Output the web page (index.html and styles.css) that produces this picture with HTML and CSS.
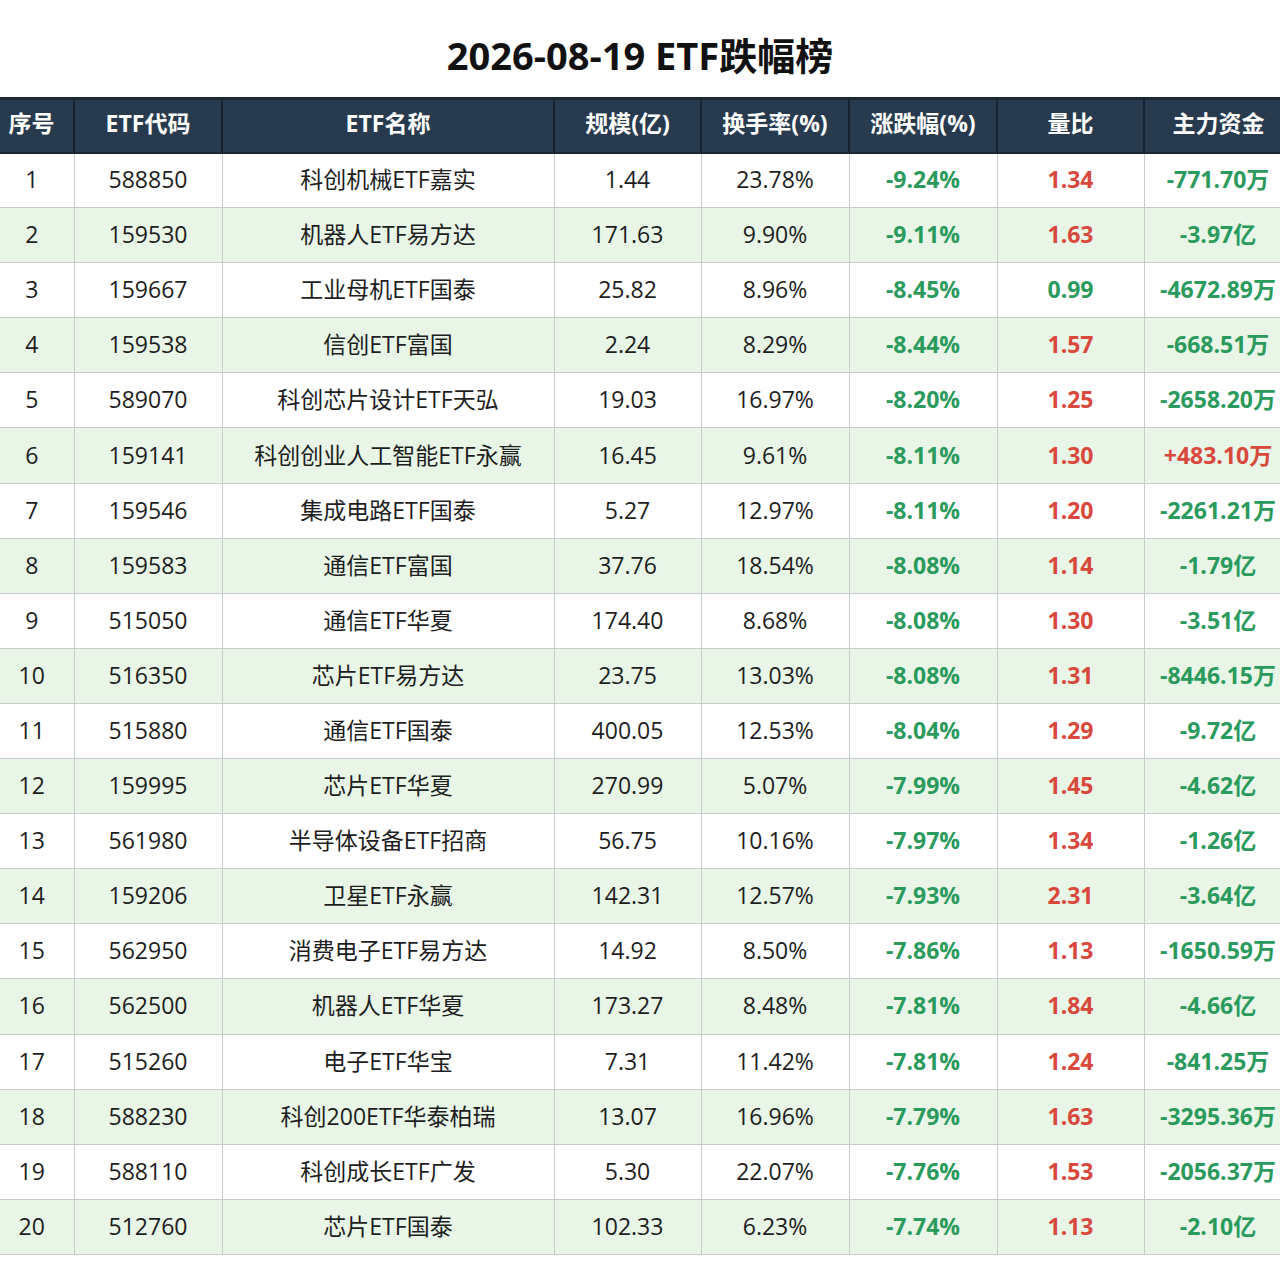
FILE: index.html
```html
<!DOCTYPE html>
<html lang="zh">
<head>
<meta charset="utf-8">
<title>2026-08-19 ETF跌幅榜</title>
<link rel="stylesheet" href="styles.css">
</head>
<body>
<div class="page">
  <h1 class="title">2026-08-19 ETF跌幅榜</h1>
  <table class="etf">
    <colgroup>
      <col class="c1"><col class="c2"><col class="c3"><col class="c4"><col class="c5"><col class="c6"><col class="c7"><col class="c8">
    </colgroup>
    <thead>
      <tr><th>序号</th><th>ETF代码</th><th>ETF名称</th><th>规模(亿)</th><th>换手率(%)</th><th>涨跌幅(%)</th><th>量比</th><th>主力资金</th></tr>
    </thead>
    <tbody>
      <tr><td>1</td><td>588850</td><td>科创机械ETF嘉实</td><td>1.44</td><td>23.78%</td><td class="g">-9.24%</td><td class="r">1.34</td><td class="g">-771.70万</td></tr>
      <tr><td>2</td><td>159530</td><td>机器人ETF易方达</td><td>171.63</td><td>9.90%</td><td class="g">-9.11%</td><td class="r">1.63</td><td class="g">-3.97亿</td></tr>
      <tr><td>3</td><td>159667</td><td>工业母机ETF国泰</td><td>25.82</td><td>8.96%</td><td class="g">-8.45%</td><td class="g">0.99</td><td class="g">-4672.89万</td></tr>
      <tr><td>4</td><td>159538</td><td>信创ETF富国</td><td>2.24</td><td>8.29%</td><td class="g">-8.44%</td><td class="r">1.57</td><td class="g">-668.51万</td></tr>
      <tr><td>5</td><td>589070</td><td>科创芯片设计ETF天弘</td><td>19.03</td><td>16.97%</td><td class="g">-8.20%</td><td class="r">1.25</td><td class="g">-2658.20万</td></tr>
      <tr><td>6</td><td>159141</td><td>科创创业人工智能ETF永赢</td><td>16.45</td><td>9.61%</td><td class="g">-8.11%</td><td class="r">1.30</td><td class="r">+483.10万</td></tr>
      <tr><td>7</td><td>159546</td><td>集成电路ETF国泰</td><td>5.27</td><td>12.97%</td><td class="g">-8.11%</td><td class="r">1.20</td><td class="g">-2261.21万</td></tr>
      <tr><td>8</td><td>159583</td><td>通信ETF富国</td><td>37.76</td><td>18.54%</td><td class="g">-8.08%</td><td class="r">1.14</td><td class="g">-1.79亿</td></tr>
      <tr><td>9</td><td>515050</td><td>通信ETF华夏</td><td>174.40</td><td>8.68%</td><td class="g">-8.08%</td><td class="r">1.30</td><td class="g">-3.51亿</td></tr>
      <tr><td>10</td><td>516350</td><td>芯片ETF易方达</td><td>23.75</td><td>13.03%</td><td class="g">-8.08%</td><td class="r">1.31</td><td class="g">-8446.15万</td></tr>
      <tr><td>11</td><td>515880</td><td>通信ETF国泰</td><td>400.05</td><td>12.53%</td><td class="g">-8.04%</td><td class="r">1.29</td><td class="g">-9.72亿</td></tr>
      <tr><td>12</td><td>159995</td><td>芯片ETF华夏</td><td>270.99</td><td>5.07%</td><td class="g">-7.99%</td><td class="r">1.45</td><td class="g">-4.62亿</td></tr>
      <tr><td>13</td><td>561980</td><td>半导体设备ETF招商</td><td>56.75</td><td>10.16%</td><td class="g">-7.97%</td><td class="r">1.34</td><td class="g">-1.26亿</td></tr>
      <tr><td>14</td><td>159206</td><td>卫星ETF永赢</td><td>142.31</td><td>12.57%</td><td class="g">-7.93%</td><td class="r">2.31</td><td class="g">-3.64亿</td></tr>
      <tr><td>15</td><td>562950</td><td>消费电子ETF易方达</td><td>14.92</td><td>8.50%</td><td class="g">-7.86%</td><td class="r">1.13</td><td class="g">-1650.59万</td></tr>
      <tr><td>16</td><td>562500</td><td>机器人ETF华夏</td><td>173.27</td><td>8.48%</td><td class="g">-7.81%</td><td class="r">1.84</td><td class="g">-4.66亿</td></tr>
      <tr><td>17</td><td>515260</td><td>电子ETF华宝</td><td>7.31</td><td>11.42%</td><td class="g">-7.81%</td><td class="r">1.24</td><td class="g">-841.25万</td></tr>
      <tr><td>18</td><td>588230</td><td>科创200ETF华泰柏瑞</td><td>13.07</td><td>16.96%</td><td class="g">-7.79%</td><td class="r">1.63</td><td class="g">-3295.36万</td></tr>
      <tr><td>19</td><td>588110</td><td>科创成长ETF广发</td><td>5.30</td><td>22.07%</td><td class="g">-7.76%</td><td class="r">1.53</td><td class="g">-2056.37万</td></tr>
      <tr><td>20</td><td>512760</td><td>芯片ETF国泰</td><td>102.33</td><td>6.23%</td><td class="g">-7.74%</td><td class="r">1.13</td><td class="g">-2.10亿</td></tr>
    </tbody>
  </table>
</div>
</body>
</html>
```

FILE: styles.css
```css
html, body {
  margin: 0;
  padding: 0;
  background: #ffffff;
}
body {
  width: 1280px;
  height: 1288px;
  overflow: hidden;
  font-family: "Open Sans", "Noto Sans CJK SC", sans-serif;
  color: #1e1e1e;
}
.page {
  width: 1302px;
  margin-left: -10px;
}
.title {
  margin: 0 0 0 10px;
  height: 97px;
  box-sizing: border-box;
  padding-top: 32px;
  width: 1280px;
  text-align: center;
  font-size: 38px;
  line-height: 46px;
  font-weight: 700;
  color: #111111;
}
.etf {
  border-collapse: collapse;
  table-layout: fixed;
  width: 1302px;
}
.c1 { width: 84px; }
.c2 { width: 148px; }
.c3 { width: 332px; }
.c4 { width: 147px; }
.c5 { width: 148px; }
.c6 { width: 148px; }
.c7 { width: 147px; }
.c8 { width: 148px; }
.etf th {
  height: 54px;
  box-sizing: border-box;
  background: #283a4e;
  color: #ffffff;
  font-size: 23px;
  line-height: 30px;
  font-weight: 700;
  text-align: center;
  padding: 0 0 6px;
  border-left: 2px solid #18222e;
  border-top: 3px solid #1c2733;
  border-bottom: 2px solid #1c2733;
}
.etf th:first-child {
  border-left: none;
}
.etf td {
  height: 55.1px;
  box-sizing: border-box;
  padding: 0 0 2px;
  text-align: center;
  font-size: 23px;
  line-height: 30px;
  border: 1px solid #c9cdc9;
  white-space: nowrap;
  overflow: hidden;
}
.etf td:first-child {
  border-left: none;
}
.etf tbody tr:nth-child(even) td {
  background: #e8f5e7;
}
.etf td.g {
  color: #2b9a5d;
  font-weight: 700;
}
.etf td.r {
  color: #d8483c;
  font-weight: 700;
}
```
